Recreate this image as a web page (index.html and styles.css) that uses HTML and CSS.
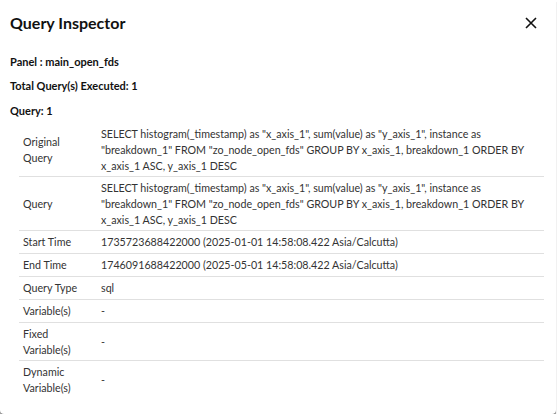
FILE: index.html
```html
<!DOCTYPE html>
<html>
<head>
<meta charset="utf-8">
<link rel="stylesheet" href="styles.css">
</head>
<body>
<div class="dialog">
  <div class="title-row">
    <div class="title">Query Inspector</div>
    <svg class="close" width="12" height="12" viewBox="0 0 12 12"><path d="M1 1L11 11M11 1L1 11" stroke="#111" stroke-width="1.6" fill="none"/></svg>
  </div>
  <div class="info">Panel : main_open_fds</div>
  <div class="info">Total Query(s) Executed: 1</div>
  <div class="info">Query: 1</div>
  <div class="table-wrap">
    <table class="qtable">
      <tr class="tall">
        <td class="label">Original Query</td>
        <td class="value">SELECT histogram(_timestamp) as "x_axis_1", sum(value) as "y_axis_1", instance as "breakdown_1" FROM "zo_node_open_fds" GROUP BY x_axis_1, breakdown_1 ORDER BY x_axis_1 ASC, y_axis_1 DESC</td>
      </tr>
      <tr class="tall">
        <td class="label">Query</td>
        <td class="value">SELECT histogram(_timestamp) as "x_axis_1", sum(value) as "y_axis_1", instance as "breakdown_1" FROM "zo_node_open_fds" GROUP BY x_axis_1, breakdown_1 ORDER BY x_axis_1 ASC, y_axis_1 DESC</td>
      </tr>
      <tr>
        <td class="label">Start Time</td>
        <td class="value">1735723688422000 (2025-01-01 14:58:08.422 Asia/Calcutta)</td>
      </tr>
      <tr>
        <td class="label">End Time</td>
        <td class="value">1746091688422000 (2025-05-01 14:58:08.422 Asia/Calcutta)</td>
      </tr>
      <tr>
        <td class="label">Query Type</td>
        <td class="value">sql</td>
      </tr>
      <tr>
        <td class="label">Variable(s)</td>
        <td class="value">-</td>
      </tr>
      <tr>
        <td class="label">Fixed Variable(s)</td>
        <td class="value">-</td>
      </tr>
      <tr class="last">
        <td class="label">Dynamic Variable(s)</td>
        <td class="value">-</td>
      </tr>
    </table>
  </div>
</div>
</body>
</html>
```
FILE: styles.css
```css
html, body {
  margin: 0;
  padding: 0;
  background: #ffffff;
}
body {
  font-family: "Lato", "Open Sans", sans-serif;
  color: #222;
}
.dialog {
  width: 556px;
  height: 414px;
  box-sizing: border-box;
  padding: 0 10px;
  background: #fff;
  border-radius: 0 0 4px 4px;
  box-shadow: 0 2px 1px rgba(0, 0, 0, 0.55);
  overflow: hidden;
}
.title-row {
  display: flex;
  justify-content: space-between;
  align-items: center;
  height: 44px;
}
.title {
  font-size: 16px;
  font-weight: 700;
  color: #111;
  padding-top: 1px;
}
.close {
  margin-right: 9px;
  margin-top: 2px;
}
.info {
  font-size: 11px;
  font-weight: 700;
  color: #111;
  line-height: 14px;
  margin-top: 10.5px;
}
.info:first-of-type {
  margin-top: 15.5px;
}
.table-wrap {
  padding-left: 9px;
  margin-top: 5.5px;
}
.qtable {
  width: 525px;
  border-collapse: collapse;
  font-size: 10.7px;
  color: #333;
}
.qtable td {
  border-bottom: 1px solid #e0e0e0;
  padding: 3px 4px;
  vertical-align: middle;
}
.qtable tr.tall td {
  padding-top: 2.5px;
  padding-bottom: 2.5px;
}
.qtable tr.last td {
  border-bottom: none;
}
.label {
  width: 62px;
  padding-right: 12px !important;
  line-height: 15.5px;
}
.value {
  line-height: 16px;
  padding-right: 10px !important;
}
```
